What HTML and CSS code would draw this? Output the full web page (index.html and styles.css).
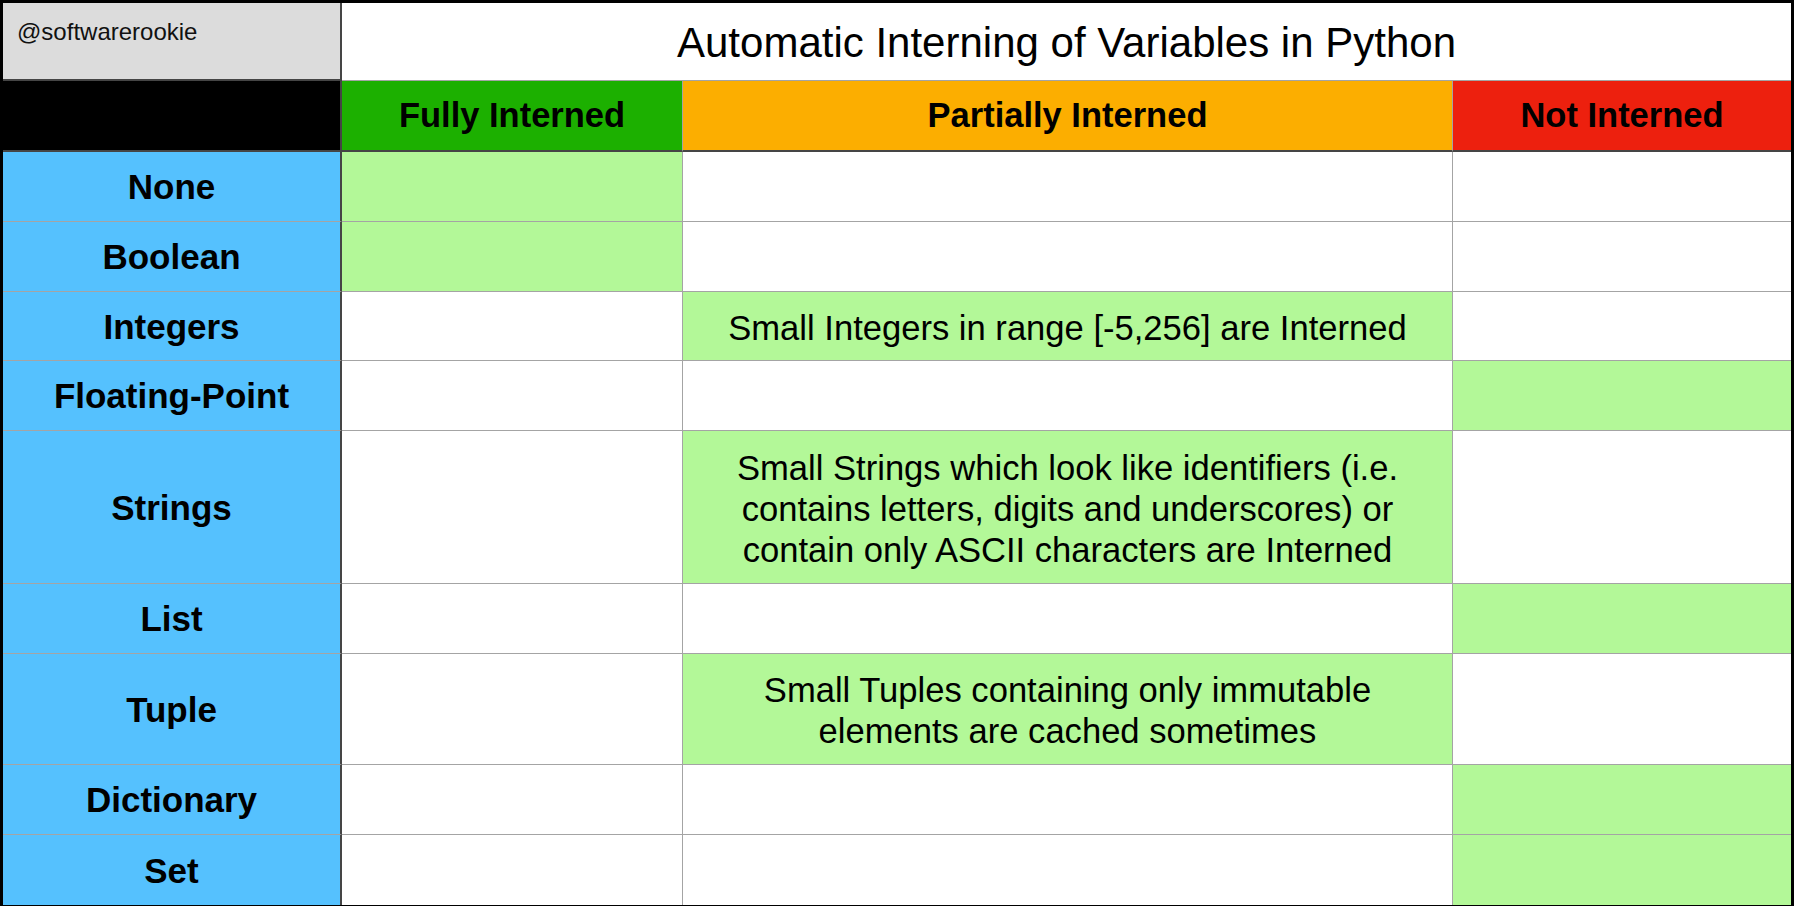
FILE: index.html
```html
<!DOCTYPE html>
<html lang="en">
<head>
<meta charset="utf-8">
<title>Automatic Interning of Variables in Python</title>
<link rel="stylesheet" href="styles.css">
</head>
<body>
<div class="sheet">
  <div class="cell handle">@softwarerookie</div>
  <div class="cell title span3">Automatic Interning of Variables in Python</div>

  <div class="cell corner hdr"></div>
  <div class="cell hdr full">Fully Interned</div>
  <div class="cell hdr partial">Partially Interned</div>
  <div class="cell hdr none-i last">Not Interned</div>

  <div class="cell label">None</div>
  <div class="cell hl"></div>
  <div class="cell"></div>
  <div class="cell last"></div>

  <div class="cell label">Boolean</div>
  <div class="cell hl"></div>
  <div class="cell"></div>
  <div class="cell last"></div>

  <div class="cell label">Integers</div>
  <div class="cell"></div>
  <div class="cell hl text">Small Integers in range [-5,256] are Interned</div>
  <div class="cell last"></div>

  <div class="cell label">Floating-Point</div>
  <div class="cell"></div>
  <div class="cell"></div>
  <div class="cell hl last"></div>

  <div class="cell label">Strings</div>
  <div class="cell"></div>
  <div class="cell hl text">Small Strings which look like identifiers (i.e.<br>contains letters, digits and underscores) or<br>contain only ASCII characters are Interned</div>
  <div class="cell last"></div>

  <div class="cell label">List</div>
  <div class="cell"></div>
  <div class="cell"></div>
  <div class="cell hl last"></div>

  <div class="cell label">Tuple</div>
  <div class="cell"></div>
  <div class="cell hl text">Small Tuples containing only immutable<br>elements are cached sometimes</div>
  <div class="cell last"></div>

  <div class="cell label">Dictionary</div>
  <div class="cell"></div>
  <div class="cell"></div>
  <div class="cell hl last"></div>

  <div class="cell label bottom">Set</div>
  <div class="cell bottom"></div>
  <div class="cell bottom"></div>
  <div class="cell hl last bottom"></div>
</div>
</body>
</html>
```
FILE: styles.css
```css
html, body {
  margin: 0;
  padding: 0;
  background: #000;
}

body {
  width: 1794px;
  height: 906px;
  overflow: hidden;
  font-family: "Liberation Sans", Arial, Helvetica, sans-serif;
  color: #000;
}

.sheet {
  margin: 3px 3px 2px 3px;
  width: 1788px;
  height: 901px;
  display: grid;
  grid-template-columns: 339px 341px 770px 338px;
  grid-template-rows: 78px 71px 70px 70px 69px 70px 153px 70px 111px 70px 70px;
  background: #fff;
}

.cell {
  box-sizing: border-box;
  background: #fff;
  border-right: 1px solid #a4a4a4;
  border-bottom: 1px solid #a4a4a4;
  display: flex;
  align-items: center;
  justify-content: center;
  text-align: center;
  font-size: 35px;
  line-height: 41px;
}

.cell.last {
  border-right: none;
}

.cell.bottom {
  border-bottom: none;
}

.handle {
  background: #dcdcdc;
  border-right: 2px solid #454545;
  border-bottom: 2px solid #454545;
  align-items: flex-start;
  justify-content: flex-start;
  font-size: 24px;
  line-height: 28px;
  padding: 15px 0 0 14px;
  color: #111;
}

.title {
  grid-column: span 3;
  border-right: none;
  font-size: 42px;
  line-height: 48px;
  padding-top: 2px;
}

.hdr {
  border-bottom: 2px solid #454545;
  font-weight: bold;
  font-size: 34.5px;
}

.corner {
  background: #000;
  border-right: 2px solid #454545;
}

.full {
  background: #1cb000;
}

.partial {
  background: #fcae00;
}

.none-i {
  background: #ed200e;
}

.label {
  background: #55c1fe;
  border-right: 2px solid #454545;
  font-weight: bold;
}

.hl {
  background: #b3f898;
}

.text {
  font-weight: normal;
  font-size: 34.6px;
  padding-top: 4px;
}
```
